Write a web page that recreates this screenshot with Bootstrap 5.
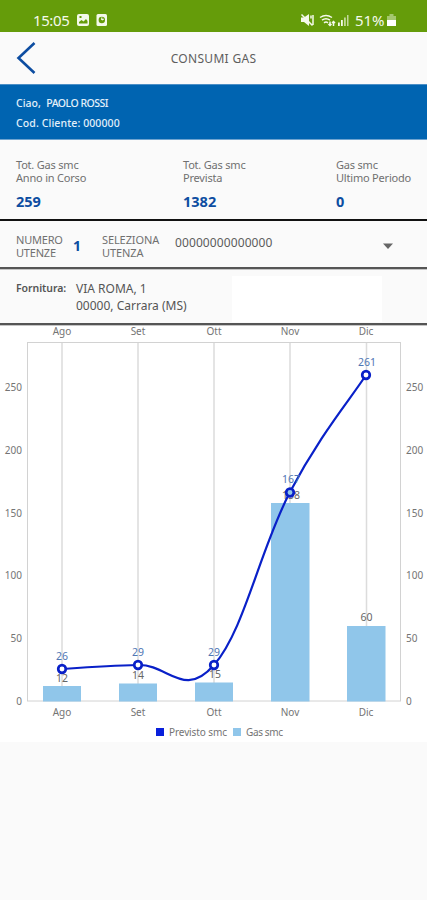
<!DOCTYPE html>
<html lang="it">
<head>
<meta charset="utf-8">
<meta name="viewport" content="width=device-width, initial-scale=1">
<title>Consumi Gas</title>
<link href="https://cdn.jsdelivr.net/npm/bootstrap@5.3.0/dist/css/bootstrap.min.css" rel="stylesheet">
<style>
body{font-family:"Noto Sans","Open Sans",sans-serif;background:#fafafa;color:#707070;font-size:11px;line-height:13px;overflow-x:hidden}
.status-bar{height:32px;background:#659c0a;color:#f4f9ea;font-size:15px;line-height:18px;padding:8px 31px 0 33px}
.status-bar span{padding-top:3px;letter-spacing:-.4px}
.status-bar .pct{width:32px;letter-spacing:-.1px}
.status-bar svg{margin-top:5px}
.title-bar{height:52px;padding:0 16px}
.title-bar h1{font-size:12px;line-height:16px;letter-spacing:.3px;color:#5e5e5e;font-weight:400;padding-right:20px;margin-top:1px}
.hello{height:56px;background:#0064b1;color:#e3f0fa;font-size:10.5px;line-height:20px;padding:8px 16px 0;border-top:1px solid #4c8fc6;border-bottom:1px solid #6fa4d0;font-weight:500}
.hello .who{letter-spacing:-.5px}
.hello .cod{letter-spacing:.1px}
.stats{height:79px;padding:18px 0 0 16px;letter-spacing:-.2px}
.stats .figure-val{color:#0d4da1;font-size:14.5px;font-weight:700;line-height:18px;margin-top:8px;letter-spacing:0}
.c1{flex:0 0 167px}.c2{flex:0 0 153px}
.rule-a{height:2px;background:#111}
.picker{height:46px;padding:12px 33px 0 16px}
.picker .lbl1{flex:0 0 57px;letter-spacing:-.2px}
.picker .count{flex:0 0 29px;color:#0d4da1;font-size:14px;font-weight:700;margin-top:6px}
.picker .lbl2{flex:0 0 73px;letter-spacing:-.1px}
.picker .code{font-size:12px;color:#5c5c5c;margin-top:3px;letter-spacing:.1px}
.rule-b{height:3px;background:#555;border-bottom:1px solid #c4c4c4}
.supply{height:53px;padding:10px 0 0 16px;line-height:17px;font-size:12px;color:#555}
.supply .tag{width:60px;font-weight:600;font-size:10.5px;letter-spacing:-.05px}
.supply .blank{width:150px;height:46px;background:#fff;margin:-4px 45px 0 auto}
.chart-area{background:#fff;height:416px}
svg{display:block}
.chart-area svg{overflow:visible}
.chart-area text{font-size:10px;fill:#747474;font-family:"Noto Sans",sans-serif}
.chart-area .vals text{fill:#4f76b4;font-size:10.5px}
.chart-area .bars text{fill:#666;font-size:10.5px}
</style>
<script src="https://cdn.jsdelivr.net/npm/bootstrap@5.3.0/dist/js/bootstrap.bundle.min.js"></script>
</head>
<body>
<header>
<div class="status-bar d-flex align-items-start">
 <span>15:05</span>
 <svg class="ms-2" width="32" height="14" viewBox="0 0 32 14"><rect x="0" y="1" width="12" height="12" rx="2" fill="#f4f9ea"/><path d="M2 10.500V9l2.500-2 2 1.500L9 6l1.500 2v2.500z" fill="#659c0a"/><rect x="2.500" y="3" width="2" height="2" fill="#659c0a"/><rect x="19.500" y="1" width="10.500" height="12" rx="1.500" fill="#f4f9ea"/><circle cx="24.800" cy="7" r="3.200" fill="#659c0a"/><path d="M24.800 7V4.500M24.800 7l2-1" stroke="#f4f9ea" stroke-width="1.200"/></svg>
 <svg class="ms-auto" width="51" height="14" viewBox="0 0 51 14"><g fill="#f4f9ea"><path d="M1 4.500h3L9 1v12l-5-4H1z"/><path d="M38 13h1.800V9.500H38zM41 13h1.800V7H41z"/><path d="M44 13h1.800V4.500H44zM47 13h1.500V2H47z" opacity=".65"/></g><g fill="none" stroke="#f4f9ea" stroke-width="1.500"><path d="M1.500 1.500l11 11M11 2.500v3M13 2v10M20 4.500Q26 .5 32 4.500M22 7.200q4-2.800 8 0M24 9.800q2-1.500 4 0M30 8.500v4M28.500 11l1.500 1.500 1.500-1.500M33.500 13V8.500M32 10l1.500-1.500L35 10"/></g></svg>
 <span class="pct ms-1">51%</span>
 <svg width="9" height="14" viewBox="0 0 9 14"><path d="M2.500 1h4v2H9v10H0V3h2.500z" fill="#a5c76f"/><path d="M0 7h9v6H0z" fill="#fff"/></svg>
</div>
<div class="title-bar d-flex align-items-center">
 <svg width="20" height="34" viewBox="0 0 20 34"><path d="M18.500 2L2.500 17l16 15" fill="none" stroke="#0d4da1" stroke-width="2.600"/></svg>
 <h1 class="mb-0 flex-fill text-center">CONSUMI GAS</h1>
</div>
</header>
<main>
<section class="hello"><div>Ciao,&nbsp; <span class="who">PAOLO ROSSI</span></div><div class="cod">Cod. Cliente: 000000</div></section>
<section class="stats d-flex">
 <div class="c1">Tot. Gas smc<br>Anno in Corso<div class="figure-val">259</div></div>
 <div class="c2">Tot. Gas smc<br>Prevista<div class="figure-val">1382</div></div>
 <div class="text-nowrap">Gas smc<br>Ultimo Periodo<div class="figure-val">0</div></div>
</section>
<div class="rule-a"></div>
<section class="picker d-flex align-items-start">
 <div class="lbl1">NUMERO<br>UTENZE</div><div class="count">1</div>
 <div class="lbl2">SELEZIONA<br>UTENZA</div>
 <div class="code">00000000000000</div>
 <svg class="ms-auto mt-2" width="12" height="10" viewBox="0 0 12 10"><path d="M1 2.500h10L6 8z" fill="#666"/></svg>
</section>
<div class="rule-b"></div>
<section class="supply d-flex"><div class="tag">Fornitura:</div><div>VIA ROMA, 1<br>00000, Carrara (MS)</div><div class="blank"></div></section>
<div class="rule-b"></div>
<section class="chart-area">
<svg width="427" height="416" viewBox="0 326 427 416">
 <g stroke="#dcdcdc" fill="none"><path d="M62 342V701M138 342V701M214 342V701M290 342V701M366.500 342V701" stroke-width="1.500"/><rect x="27.500" y="342.500" width="373" height="358.500" stroke="#d2d2d2"/></g>
 <g fill="#90c6ea"><path d="M43 686h38v15.500H43zM119 683.500h38v18h-38zM195 682.500h38v19h-38zM271 503h38.500v198.500H271zM347 626h38.500v75.500H347z"/></g>
 <g class="bars" text-anchor="middle"><text x="62" y="681.500">12</text><text x="138" y="679">14</text><text x="215" y="678">15</text><text x="291" y="499">158</text><text x="366.500" y="621">60</text></g>
 <path d="M62 669C77 668 108 665.800 138 665C168 664 184 699.600 214 665C244.400 630.400 259.600 550 290 492C320.400 434 351 398.400 366 375" fill="none" stroke="#0920c8" stroke-width="2.200"/>
 <g fill="#fff" stroke="#0920c8" stroke-width="2.700"><circle cx="62" cy="669" r="3.800"/><circle cx="138" cy="665" r="3.800"/><circle cx="214" cy="665" r="3.800"/><circle cx="290" cy="492.500" r="3.800" fill="#90c6ea"/><circle cx="366" cy="375" r="3.800"/></g>
 <g class="vals" text-anchor="middle"><text x="62" y="660">26</text><text x="138" y="656">29</text><text x="214" y="656">29</text><text x="291" y="483">167</text><text x="367" y="366">261</text></g>
 <g text-anchor="middle"><text x="62" y="335">Ago</text><text x="138" y="335">Set</text><text x="214" y="335">Ott</text><text x="290" y="335">Nov</text><text x="366" y="335">Dic</text><text x="62" y="715.500">Ago</text><text x="138" y="715.500">Set</text><text x="214" y="715.500">Ott</text><text x="290" y="715.500">Nov</text><text x="366" y="715.500">Dic</text></g>
 <g text-anchor="end"><text x="22" y="391">250</text><text x="22" y="454">200</text><text x="22" y="517">150</text><text x="22" y="579">100</text><text x="22" y="642">50</text><text x="22" y="705">0</text></g>
 <g><text x="406" y="391">250</text><text x="406" y="454">200</text><text x="406" y="517">150</text><text x="406" y="579">100</text><text x="406" y="642">50</text><text x="406" y="705">0</text></g>
 <rect x="156" y="728" width="8" height="8" fill="#0920dc"/><text x="169" y="736" textLength="58">Previsto smc</text>
 <rect x="233" y="728" width="8" height="8" fill="#90c6ea"/><text x="246" y="736" textLength="37">Gas smc</text>
</svg>
</section>
</main>
</body>
</html>
